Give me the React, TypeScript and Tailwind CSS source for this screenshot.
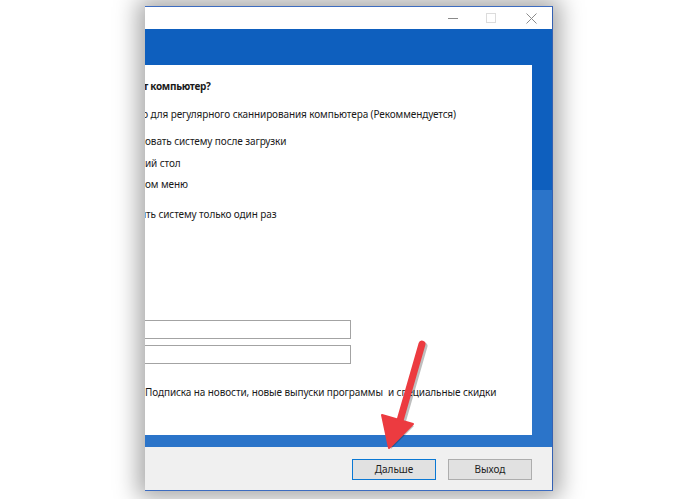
const FONT = "font-['Noto_Sans','Liberation_Sans',sans-serif]"

function Arrow() {
  return (
    <svg className="pointer-events-none absolute left-0 top-0" width="699" height="499" viewBox="0 0 699 499">
      <g opacity="0.25" transform="translate(2 2)">
        <line x1="422" y1="344" x2="399" y2="424" stroke="#000" strokeWidth="7" strokeLinecap="round" />
        <polygon points="389,447 383,416 412,424" fill="#000" />
      </g>
      <line x1="422" y1="344" x2="399" y2="424" stroke="#ec3b40" strokeWidth="7" strokeLinecap="round" />
      <polygon points="389,448 382,415 413,424" fill="#ec3b40" strokeLinejoin="round" stroke="#ec3b40" strokeWidth="2" />
    </svg>
  )
}

function TitleBar() {
  return (
    <div className="flex h-[22px] items-center justify-end bg-white">
      <div className="flex h-full w-[38px] items-center justify-center">
        <div className="h-px w-[10px] bg-[#8a8a8a]" />
      </div>
      <div className="flex h-full w-[38px] items-center justify-center">
        <div className="h-[10px] w-[10px] border border-[#dcdcdc]" />
      </div>
      <div className="flex h-full w-[42px] items-center justify-center">
        <svg width="11" height="11" viewBox="0 0 11 11">
          <path d="M0.5 0.5 L10.5 10.5 M10.5 0.5 L0.5 10.5" stroke="#8c8c8c" strokeWidth="1" />
        </svg>
      </div>
    </div>
  )
}

export default function App() {
  return (
    <div className={`relative h-[499px] w-[699px] overflow-hidden bg-white ${FONT}`}>
      <div className="ml-[145px] mt-[6px] flex h-[485px] w-[408px] flex-col overflow-hidden border-y border-r border-y-[#3d6cc0] border-r-[#3461b3] shadow-[0_0_22px_7px_rgba(0,0,0,0.35)]">
        <TitleBar />
        <div className="flex flex-1 flex-col bg-[#2b74c9]">
          <div className="h-[36px] bg-[#0e5fbe]" />
          <div className="flex h-[370px]">
            <div className="flex w-[387px] flex-col bg-white text-[10px] leading-[14px] tracking-[-0.1px] text-[#1a1a1a]">
              <div className="mt-[14px] flex whitespace-nowrap font-bold tracking-[-0.3px]">
                <div className="-ml-[200px] flex w-[203px] shrink-0 justify-end">Как защищает</div>
                <span>&nbsp;компьютер?</span>
              </div>
              <div className="mt-[14px] flex whitespace-nowrap">
                <div className="-ml-[200px] flex w-[203px] shrink-0 justify-end">Запускать ежедневно</div>
                <span>&nbsp;для регулярного сканнирования компьютера (Рекоммендуется)</span>
              </div>
              <div className="mt-[13px] flex whitespace-nowrap">
                <div className="-ml-[200px] flex w-[200px] shrink-0 justify-end">Сканир</div>
                <span>овать систему после загрузки</span>
              </div>
              <div className="mt-[8px] flex whitespace-nowrap">
                <div className="-ml-[200px] flex w-[200px] shrink-0 justify-end">Ярлык на рабоч</div>
                <span>ий стол</span>
              </div>
              <div className="mt-[7px] flex whitespace-nowrap">
                <div className="-ml-[200px] flex w-[200px] shrink-0 justify-end">Ярлык в стартов</div>
                <span>ом меню</span>
              </div>
              <div className="mt-[16px] flex whitespace-nowrap">
                <div className="-ml-[200px] flex w-[201px] shrink-0 justify-end">Провери</div>
                <span>ть систему только один раз</span>
              </div>
              <div className="-ml-[60px] mt-[99px] h-[19px] w-[266px] border border-[#a3a3a3] bg-white" />
              <div className="-ml-[60px] mt-[6px] h-[19px] w-[266px] border border-[#a3a3a3] bg-white" />
              <div className="mt-[21px] whitespace-nowrap">
                Подписка на новости, новые выпуски программы&nbsp; и специальные скидки
              </div>
            </div>
            <div className="flex w-[20px] flex-col">
              <div className="h-[125px] bg-[#0e5fbe]" />
            </div>
          </div>
          <div className="h-[12px]" />
          <div className="flex h-[43px] items-start justify-end gap-[12px] bg-[#f0f0f0] pr-[20px] pt-[12px]">
            <button className="flex h-[21px] w-[84px] items-center justify-center border border-[#0a78d4] bg-[#e1e1e1] text-[10px] text-[#1e1e1e]">
              Дальше
            </button>
            <button className="flex h-[21px] w-[84px] items-center justify-center border border-[#adadad] bg-[#e1e1e1] text-[10px] text-[#1e1e1e]">
              Выход
            </button>
          </div>
        </div>
      </div>
      <Arrow />
    </div>
  )
}
